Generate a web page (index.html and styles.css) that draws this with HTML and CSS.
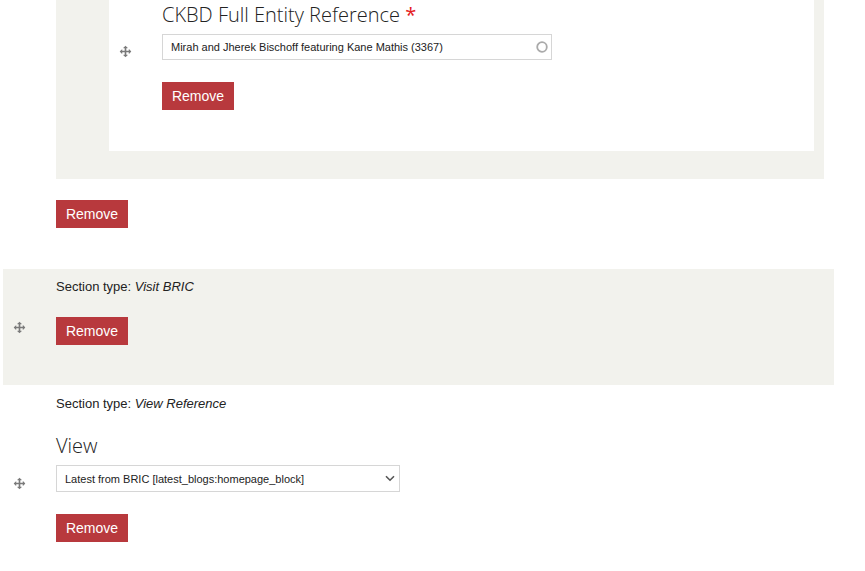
FILE: index.html
```html
<!DOCTYPE html>
<html lang="en">
<head>
<meta charset="utf-8">
<title>Sections</title>
<link rel="stylesheet" href="styles.css">
</head>
<body>
<div class="page">
  <div class="panel">
    <div class="row box">
      <div class="drag">
        <svg class="move" viewBox="0 0 16 16" width="13" height="13"><path d="M14.904 7.753l-2.373-2.372c-.291-.292-.529-.193-.529.22v1.399h-3v-3h1.398c.414 0 .512-.239.221-.53l-2.371-2.372c-.137-.136-.36-.136-.497 0l-2.372 2.372c-.292.292-.193.53.22.53h1.399v3h-3v-1.369c0-.413-.239-.511-.53-.22l-2.372 2.372c-.136.136-.136.359 0 .494l2.372 2.372c.291.292.53.192.53-.219v-1.43h3v3h-1.4c-.413 0-.511.238-.22.529l2.374 2.373c.137.137.36.137.495 0l2.373-2.373c.29-.291.19-.529-.222-.529h-1.398v-3h3v1.4c0 .412.238.511.529.219l2.373-2.371c.137-.137.137-.359 0-.495z"/></svg>
      </div>
      <div class="content box-content">
        <h2 class="label">CKBD Full Entity Reference <span class="req">*</span></h2>
        <div class="field input-field">
          <input class="text" type="text" value="Mirah and Jherek Bischoff featuring Kane Mathis (3367)">
          <svg class="throbber" viewBox="0 0 14 14" width="14" height="14"><circle cx="7" cy="7" r="4.8" fill="none" stroke="#aaa" stroke-width="1.8"/></svg>
        </div>
        <button class="btn">Remove</button>
      </div>
    </div>
  </div>

  <div class="outer-actions">
    <button class="btn">Remove</button>
  </div>

  <div class="row section gray">
    <div class="drag">
      <svg class="move" viewBox="0 0 16 16" width="13" height="13"><path d="M14.904 7.753l-2.373-2.372c-.291-.292-.529-.193-.529.22v1.399h-3v-3h1.398c.414 0 .512-.239.221-.53l-2.371-2.372c-.137-.136-.36-.136-.497 0l-2.372 2.372c-.292.292-.193.53.22.53h1.399v3h-3v-1.369c0-.413-.239-.511-.53-.22l-2.372 2.372c-.136.136-.136.359 0 .494l2.372 2.372c.291.292.53.192.53-.219v-1.43h3v3h-1.4c-.413 0-.511.238-.22.529l2.374 2.373c.137.137.36.137.495 0l2.373-2.373c.29-.291.19-.529-.222-.529h-1.398v-3h3v1.4c0 .412.238.511.529.219l2.373-2.371c.137-.137.137-.359 0-.495z"/></svg>
    </div>
    <div class="content sec2">
      <p class="type">Section type: <em>Visit BRIC</em></p>
      <button class="btn">Remove</button>
    </div>
  </div>

  <div class="row section">
    <div class="drag">
      <svg class="move" viewBox="0 0 16 16" width="13" height="13"><path d="M14.904 7.753l-2.373-2.372c-.291-.292-.529-.193-.529.22v1.399h-3v-3h1.398c.414 0 .512-.239.221-.53l-2.371-2.372c-.137-.136-.36-.136-.497 0l-2.372 2.372c-.292.292-.193.53.22.53h1.399v3h-3v-1.369c0-.413-.239-.511-.53-.22l-2.372 2.372c-.136.136-.136.359 0 .494l2.372 2.372c.291.292.53.192.53-.219v-1.43h3v3h-1.4c-.413 0-.511.238-.22.529l2.374 2.373c.137.137.36.137.495 0l2.373-2.373c.29-.291.19-.529-.222-.529h-1.398v-3h3v1.4c0 .412.238.511.529.219l2.373-2.371c.137-.137.137-.359 0-.495z"/></svg>
    </div>
    <div class="content sec3">
      <p class="type">Section type: <em>View Reference</em></p>
      <h2 class="label view-label">View</h2>
      <div class="field select-field">
        <select class="select">
          <option>Latest from BRIC [latest_blogs:homepage_block]</option>
        </select>
        <svg class="chev" viewBox="0 0 10 7" width="10" height="7"><path d="M1 1.2l4 4 4-4" fill="none" stroke="#555" stroke-width="1.6"/></svg>
      </div>
      <button class="btn">Remove</button>
    </div>
  </div>
</div>
</body>
</html>
```

FILE: styles.css
```css
* { box-sizing: border-box; }

html, body {
  margin: 0;
  padding: 0;
  background: #fff;
}

body {
  font-family: "Liberation Sans", Arial, sans-serif;
  font-size: 13px;
  color: #222;
  overflow: hidden;
}

.page {
  width: 865px;
}

.panel {
  margin-top: -49px;
  margin-left: 56px;
  width: 768px;
  background: #f2f2ed;
  padding: 0 10px 28px 53px;
}

.row {
  display: flex;
}

.drag {
  flex: none;
  width: 53px;
  display: flex;
  align-items: center;
  padding-left: 10px;
}

.move {
  display: block;
  fill: #7a7a7a;
}

.content {
  flex: 1;
  min-width: 0;
}

.box {
  background: #fff;
}

.box-content {
  padding: 50px 0 41px;
}

.label {
  margin: 0;
  font-family: "Open Sans", sans-serif;
  font-weight: 300;
  font-size: 20px;
  line-height: 27px;
  color: #222;
}

.req {
  color: #e4201c;
  font-weight: 400;
}

.field {
  position: relative;
}

.input-field {
  width: 390px;
  margin-top: 6px;
}

.text {
  display: block;
  width: 100%;
  height: 26px;
  border: 1px solid #d6d6d6;
  border-radius: 0;
  padding: 0 24px 0 8px;
  font-family: "Liberation Sans", Arial, sans-serif;
  font-size: 11px;
  color: #222;
  background: #fff;
  outline: none;
}

.throbber {
  position: absolute;
  right: 3px;
  top: 6px;
}

.btn {
  display: block;
  width: 72px;
  height: 28px;
  margin: 22px 0 0;
  padding: 0;
  border: 0;
  border-radius: 0;
  background: #b8393d;
  color: #fff;
  font-family: "Liberation Sans", Arial, sans-serif;
  font-size: 14px;
  line-height: 28px;
  text-align: center;
}

.outer-actions {
  padding-left: 56px;
}

.outer-actions .btn {
  margin-top: 21px;
}

.section {
  margin-left: 3px;
  width: 831px;
}

.gray {
  background: #f2f2ed;
  margin-top: 41px;
}

.sec2 {
  padding: 9px 0 40px;
}

.sec2 .btn {
  margin-top: 21px;
}

.type {
  margin: 0;
  font-size: 13px;
  line-height: 18px;
  color: #222;
}

.type em {
  font-style: italic;
}

.sec3 {
  padding: 10px 0 39px;
}

.view-label {
  margin-top: 20px;
  font-size: 20px;
  line-height: 26px;
}

.select-field {
  width: 344px;
  margin-top: 6px;
}

.select {
  display: block;
  width: 100%;
  height: 27px;
  border: 1px solid #d6d6d6;
  border-radius: 0;
  padding: 0 24px 0 8px;
  background: #fff;
  font-family: "Liberation Sans", Arial, sans-serif;
  font-size: 11px;
  color: #222;
  -webkit-appearance: none;
  appearance: none;
  outline: none;
}

.chev {
  position: absolute;
  right: 5px;
  top: 10px;
  pointer-events: none;
}

.sec3 .btn {
  margin-top: 22px;
}
```
